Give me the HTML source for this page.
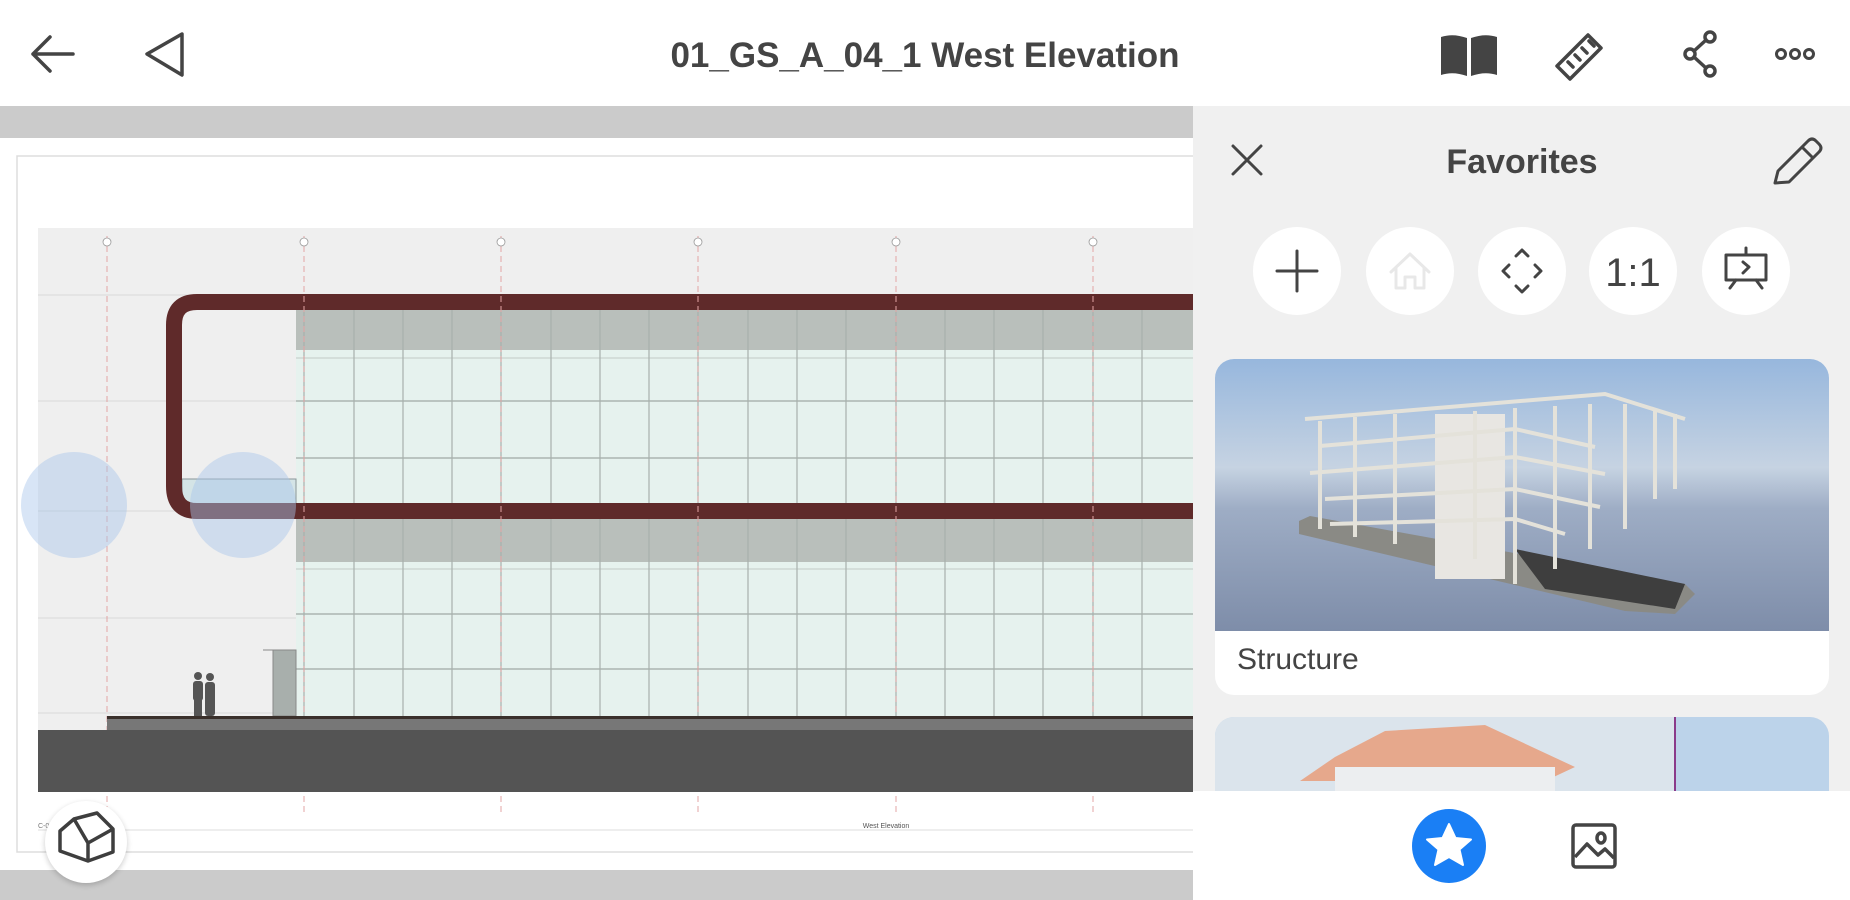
<!DOCTYPE html>
<html><head><meta charset="utf-8"><style>
*{margin:0;padding:0;box-sizing:border-box}
body{width:1850px;height:900px;overflow:hidden;background:#fff;font-family:"Liberation Sans",Roboto,sans-serif;position:relative}
.abs{position:absolute}
</style></head><body>
<div class="abs" style="left:0;top:0;width:1850px;height:106px;background:#fff"></div>
<svg class="abs" style="left:0;top:0" width="1850" height="106">
 <g fill="none" stroke="#444" stroke-width="3.5" stroke-linecap="round" stroke-linejoin="round">
  <path d="M33 54H73M33 54L50 37M33 54L50 71"/>
  <path d="M182 34L147 54L182 75Z"/>
  <path d="M1557 66L1588 35L1601 48L1570 79Z"/>
  <path d="M1568 62L1573 67M1575 55L1580 60M1582 48L1587 53M1589 41L1594 46"/>
  <circle cx="1690" cy="54" r="5"/><circle cx="1710" cy="37" r="5"/><circle cx="1710" cy="71" r="5"/>
  <path d="M1694 51L1706 40M1694 57L1706 68"/>
  <circle cx="1781" cy="54" r="4.5" stroke-width="3"/><circle cx="1795" cy="54" r="4.5" stroke-width="3"/><circle cx="1809" cy="54" r="4.5" stroke-width="3"/>
 </g>
 <path d="M1441 37Q1453 33 1467 38V76Q1453 71 1441 75Z M1497 37Q1485 33 1471 38V76Q1485 71 1497 75Z" fill="#444"/>
 <text x="925" y="67" text-anchor="middle" font-family="Liberation Sans" font-weight="bold" font-size="35" fill="#444">01_GS_A_04_1 West Elevation</text>
</svg>
<div class="abs" style="left:0;top:106px;width:1193px;height:32px;background:#cbcbcb"></div>
<div class="abs" style="left:0;top:870px;width:1193px;height:30px;background:#cbcbcb"></div>
<svg class="abs" style="left:0;top:138px" width="1193" height="732">
 <rect x="17" y="18" width="1190" height="696" fill="#fff" stroke="#ddd" stroke-width="1.5"/>
 <line x1="38" y1="692" x2="1193" y2="692" stroke="#ddd"/>
 <rect x="38" y="90" width="1160" height="564" fill="#efefef"/>
 <g stroke="#d8d8d8" stroke-width="1"><line x1="38" y1="157" x2="1193" y2="157"/><line x1="38" y1="263" x2="1193" y2="263"/><line x1="38" y1="373" x2="1193" y2="373"/><line x1="38" y1="480" x2="1193" y2="480"/><line x1="38" y1="575" x2="1193" y2="575"/></g>
 <rect x="296" y="171" width="897" height="407" fill="#e6f2ee"/>
 <rect x="296" y="171" width="897" height="41" fill="#b9bfbb"/>
 <rect x="296" y="381" width="897" height="43" fill="#b9bfbb"/>
 <g stroke="#9fa8a4" stroke-width="1.2">
  <line x1="296" y1="263" x2="1193" y2="263"/><line x1="296" y1="320" x2="1193" y2="320"/>
  <line x1="296" y1="476" x2="1193" y2="476"/><line x1="296" y1="531" x2="1193" y2="531"/>
  <line x1="296" y1="220" x2="1193" y2="220" stroke="#c9d3cf"/><line x1="296" y1="431" x2="1193" y2="431" stroke="#c9d3cf"/>
 </g>
 <g stroke="#a8b1ad" stroke-width="1.2">
  <line x1="304" y1="171" x2="304" y2="578"/><line x1="354" y1="171" x2="354" y2="578"/><line x1="403" y1="171" x2="403" y2="578"/><line x1="452" y1="171" x2="452" y2="578"/><line x1="501" y1="171" x2="501" y2="578"/><line x1="551" y1="171" x2="551" y2="578"/><line x1="600" y1="171" x2="600" y2="578"/><line x1="649" y1="171" x2="649" y2="578"/><line x1="698" y1="171" x2="698" y2="578"/><line x1="748" y1="171" x2="748" y2="578"/><line x1="797" y1="171" x2="797" y2="578"/><line x1="846" y1="171" x2="846" y2="578"/><line x1="896" y1="171" x2="896" y2="578"/><line x1="945" y1="171" x2="945" y2="578"/><line x1="994" y1="171" x2="994" y2="578"/><line x1="1043" y1="171" x2="1043" y2="578"/><line x1="1093" y1="171" x2="1093" y2="578"/><line x1="1142" y1="171" x2="1142" y2="578"/>
 </g>
 <rect x="182" y="341" width="114" height="25" fill="#d4e4e6" stroke="#8a9698"/>
 <path d="M1193 164H197Q174 164 174 187V348Q174 373 197 373H1193" fill="none" stroke="#5f2a2a" stroke-width="16"/>
 <g stroke="#e3a4a4" stroke-width="1" stroke-dasharray="6 4"><line x1="107" y1="98" x2="107" y2="676"/><line x1="304" y1="98" x2="304" y2="676"/><line x1="501" y1="98" x2="501" y2="676"/><line x1="698" y1="98" x2="698" y2="676"/><line x1="896" y1="98" x2="896" y2="676"/><line x1="1093" y1="98" x2="1093" y2="676"/></g>
 <g fill="#fff" stroke="#999" stroke-width="0.8"><circle cx="107" cy="104" r="4"/><circle cx="304" cy="104" r="4"/><circle cx="501" cy="104" r="4"/><circle cx="698" cy="104" r="4"/><circle cx="896" cy="104" r="4"/><circle cx="1093" cy="104" r="4"/></g>
 <circle cx="74" cy="367" r="53" fill="#a9c6ec" opacity="0.45"/>
 <circle cx="243" cy="367" r="53" fill="#a9c6ec" opacity="0.45"/>
 <rect x="273" y="512" width="23" height="66" fill="#a8afac" stroke="#888"/>
 <line x1="263" y1="512" x2="296" y2="512" stroke="#888"/>
 <g fill="#555"><circle cx="198" cy="538" r="4"/><rect x="193" y="543" width="10" height="20" rx="3"/><rect x="194" y="560" width="8" height="18"/><circle cx="210" cy="539" r="4"/><rect x="205" y="544" width="10" height="34" rx="3"/></g>
 <rect x="107" y="578" width="1086" height="3" fill="#3a302b"/>
 <rect x="107" y="581" width="1086" height="11" fill="#777"/>
 <rect x="38" y="592" width="1160" height="62" fill="#545454"/>
 <text x="886" y="690" text-anchor="middle" font-size="7" fill="#555">West Elevation</text>
 <text x="38" y="690" font-size="7" fill="#777">C-0</text>
</svg>
<div class="abs" style="left:45px;top:801px;width:82px;height:82px;border-radius:50%;background:#fff;box-shadow:0 2px 6px rgba(0,0,0,.2)"></div>
<svg class="abs" style="left:45px;top:801px" width="82" height="82"><g fill="none" stroke="#3e3e3e" stroke-width="3.5" stroke-linejoin="round"><path d="M15 30L29 18L52 12L68 28V51L43 60L15 50Z"/><path d="M29 18L43 42L68 28M43 42V60"/></g></svg>
<div class="abs" style="left:1193px;top:106px;width:657px;height:685px;background:#f0f0f0"></div>
<svg class="abs" style="left:1193px;top:106px" width="657" height="180">
 <g fill="none" stroke="#444" stroke-width="3" stroke-linecap="round" stroke-linejoin="round">
  <path d="M40 40L68 68M68 40L40 68"/>
  <path d="M582 77L585 65L615 35Q619 31 623 35L626 38Q630 42 626 46L596 76Z M609 41L620 52"/>
 </g>
 <text x="329" y="67" text-anchor="middle" font-weight="bold" font-size="34" fill="#444">Favorites</text>
</svg>
<svg class="abs" style="left:1193px;top:220px" width="657" height="110">
 <g fill="#fff"><circle cx="104" cy="51" r="44"/><circle cx="217" cy="51" r="44"/><circle cx="329" cy="51" r="44"/><circle cx="440" cy="51" r="44"/><circle cx="553" cy="51" r="44"/></g>
 <g fill="none" stroke="#444" stroke-width="3" stroke-linecap="round" stroke-linejoin="round">
  <path d="M104 31V71M84 51H124"/>
  <path d="M198 52L217 34L236 52M203 48V68H212V57H222V68H231V48" stroke="#e8e8e8"/>
  <path d="M323 36L329 30L335 36M323 66L329 72L335 66M316 45L310 51L316 57M342 45L348 51L342 57"/>
  <path d="M533 35H573V60H533Z M553 28V35M543 60L537 68M563 60L569 68M550 42L556 47L550 53"/>
 </g>
 <text x="440" y="66" text-anchor="middle" font-size="40" fill="#444">1:1</text>
</svg>
<div class="abs" style="left:1215px;top:359px;width:614px;height:336px;border-radius:19px;background:#fff;overflow:hidden">
<svg width="614" height="272" style="display:block">
 <defs><linearGradient id="sk" x1="0" y1="0" x2="0" y2="1"><stop offset="0" stop-color="#97b7dd"/><stop offset=".4" stop-color="#c6d3e2"/><stop offset=".55" stop-color="#9eadc5"/><stop offset="1" stop-color="#7e8da9"/></linearGradient></defs>
 <rect width="614" height="272" fill="url(#sk)"/>
 <path d="M84 162L95 157L470 225L480 235L460 255L410 252L84 175Z" fill="#8a8a85"/>
 <path d="M300 190L470 225L460 250L330 230Z" fill="#3e3e3e"/>
 <rect x="220" y="55" width="70" height="165" fill="#e8e6e2"/>
 <g stroke="#e4e2da" stroke-width="4" fill="none">
  <path d="M90 60L390 35L470 60"/><path d="M105 87L300 70L380 88"/><path d="M95 114L300 98L390 115"/><path d="M110 140L300 130L385 148"/><path d="M115 165L300 160L350 175"/>
  <path d="M105 62V170M140 58V178M180 55V185M260 52V200M300 49V225M340 47V210M375 45V190M410 45V170M440 50V140M460 55V130"/>
 </g>
</svg>
<div style="padding:12px 0 0 22px;font-size:30px;color:#444">Structure</div>
</div>
<div class="abs" style="left:1215px;top:717px;width:614px;height:74px;border-radius:19px 19px 0 0;overflow:hidden">
<svg width="614" height="74"><rect width="614" height="74" fill="#bcd3ea"/><rect x="0" y="0" width="460" height="74" fill="#dbe4ec"/><path d="M85 64L120 40L170 14L270 8L360 50L330 64Z" fill="#e6a88c"/><rect x="120" y="50" width="220" height="24" fill="#eceef0"/><line x1="460" y1="0" x2="460" y2="74" stroke="#8a3a8a" stroke-width="2"/></svg>
</div>
<div class="abs" style="left:1193px;top:791px;width:657px;height:109px;background:#fff"></div>
<svg class="abs" style="left:1193px;top:791px" width="657" height="109">
 <circle cx="256" cy="55" r="37" fill="#1a7ff5"/>
 <path d="M256 33L262.5 47L278 48.5L266.5 58.5L270 74L256 66L242 74L245.5 58.5L234 48.5L249.5 47Z" fill="#fff" stroke="#fff" stroke-width="2" stroke-linejoin="round"/>
 <g fill="none" stroke="#444" stroke-width="3.5" stroke-linejoin="round"><rect x="380" y="34" width="42" height="42" rx="3"/><path d="M382 66L394 53L405 64L412 58L421 67"/><ellipse cx="408" cy="47" rx="4" ry="5"/></g>
</svg>
</body></html>
